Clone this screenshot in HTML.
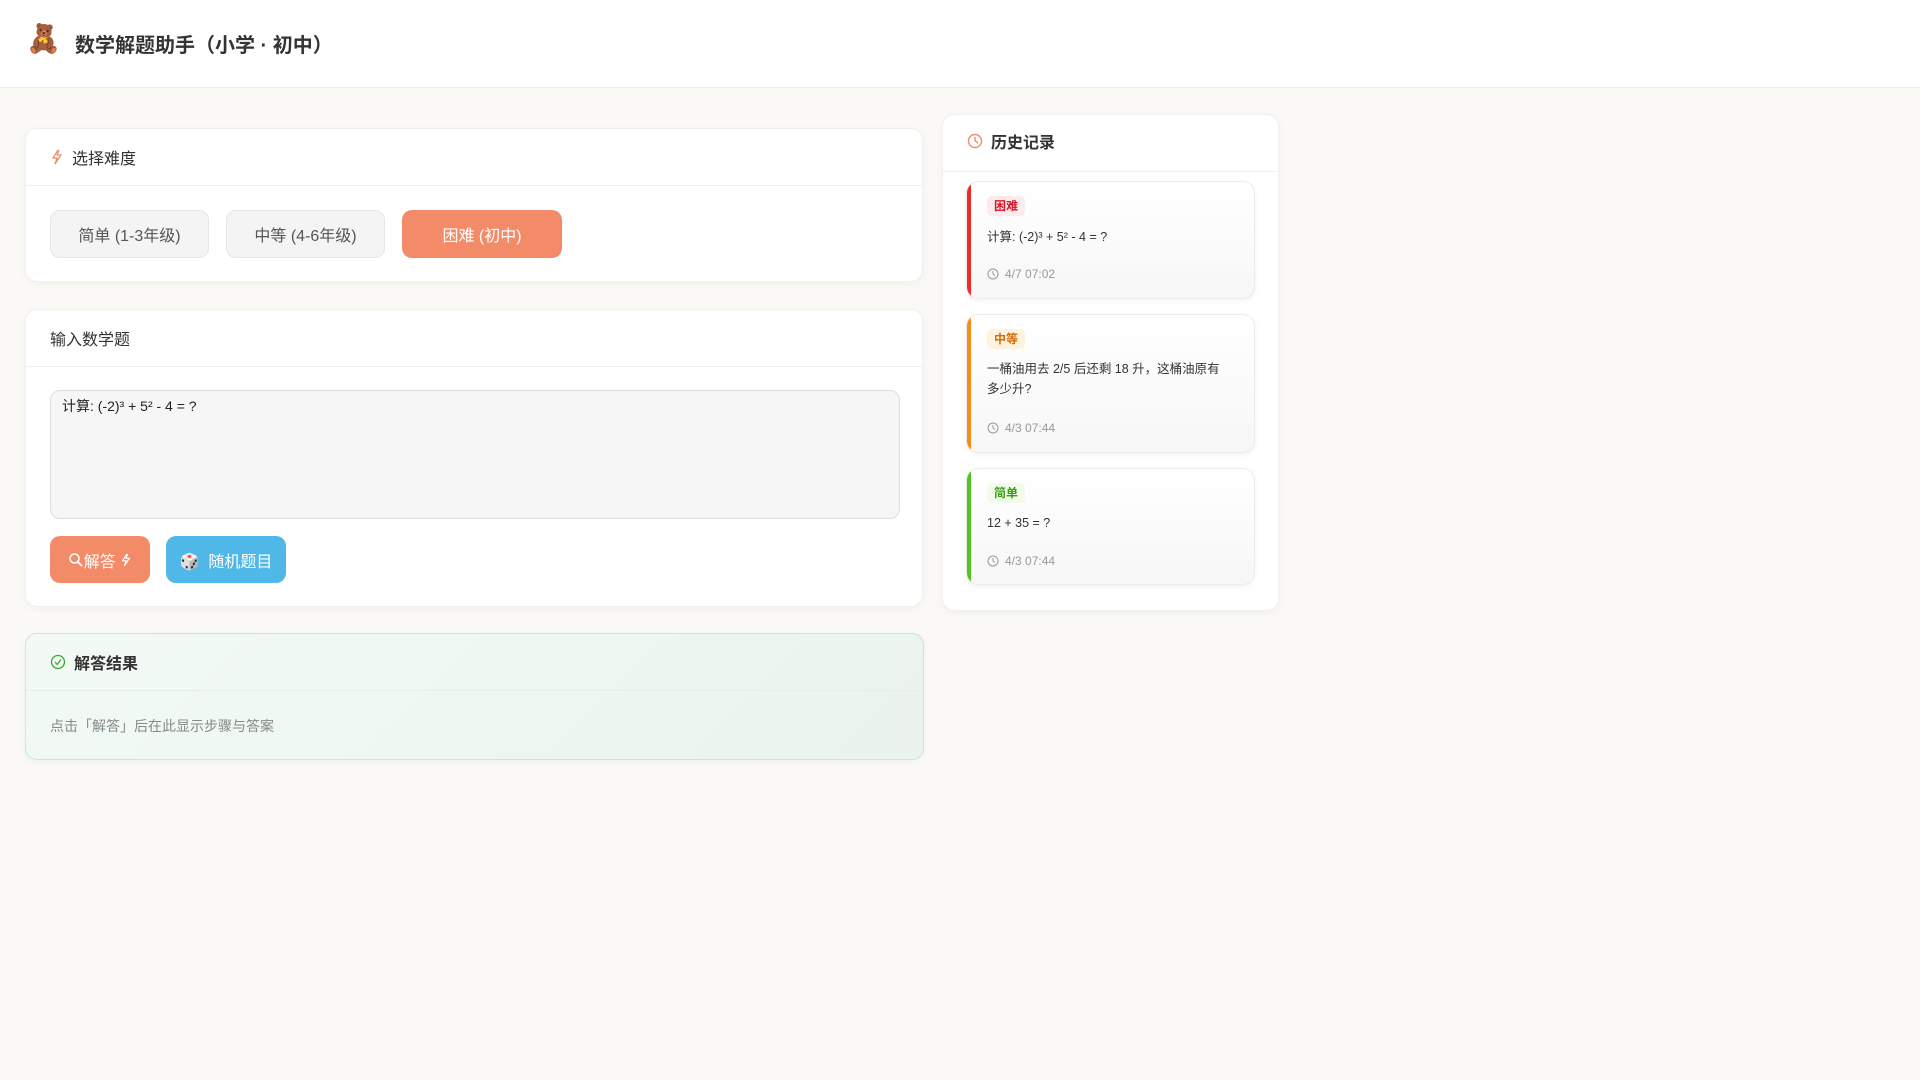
<!DOCTYPE html>
<html><head><meta charset="utf-8"><style>
*{box-sizing:border-box;margin:0;padding:0}
body{width:1920px;height:1080px;background:#faf9f6;font-family:"Liberation Sans","Noto Sans CJK SC",sans-serif;color:#333;position:relative;overflow:hidden}
.hdr{position:absolute;left:0;top:0;width:1920px;height:88px;background:#fff;border-bottom:1px solid #eee}
.hdr .logo{position:absolute;left:26px;top:22px;font-size:28px}
.hdr h1{position:absolute;left:75px;top:29px;font-size:20px;font-weight:bold;color:#333}
.card{position:absolute;background:#fff;border:1px solid #f0f0f0;border-radius:12px;box-shadow:0 2px 8px rgba(0,0,0,0.04)}
.ch{height:57px;border-bottom:1px solid #f0f0f0;display:flex;align-items:center;padding-left:24px;font-size:16px;color:#333}
.ch svg{margin-right:8px}
.btn{position:absolute;height:48px;border-radius:10px;font-size:16px;display:flex;align-items:center;justify-content:center}
.g{background:#f4f4f4;border:1px solid #e6e6e6;color:#555}
.o{background:#f38b69;color:#fff}
.item{position:absolute;left:23px;width:289px;border-radius:12px;border:1px solid #ececec;background:linear-gradient(#fff,#f7f7f7);box-shadow:0 2px 6px rgba(0,0,0,0.05);overflow:hidden}
.item .bar{position:absolute;left:0;top:0;bottom:0;width:4px}
.tag{position:absolute;left:20px;top:14px;height:20px;padding:0 7px;border-radius:5px;font-size:12px;font-weight:bold;line-height:20px}
.q{position:absolute;left:20px;font-size:12.5px;color:#333;line-height:20px;width:245px}
.t{position:absolute;left:20px;font-size:12px;color:#999;display:flex;align-items:center}
.t svg{margin-right:6px}
</style></head><body>
<div class="hdr"><div class="logo">🧸</div><h1>数学解题助手（小学 · 初中）</h1></div>

<div class="card" style="left:25px;top:128px;width:898px;height:154px">
 <div class="ch"><svg width="14" height="16" viewBox="0 0 14 16"><path d="M8 1 L3 9 H7 L5 15 L11 6 H7 L9 1" fill="none" stroke="#f38b69" stroke-width="1.2"/></svg>选择难度</div>
 <div class="btn g" style="left:24px;top:81px;width:159px">简单 (1-3年级)</div>
 <div class="btn g" style="left:200px;top:81px;width:159px">中等 (4-6年级)</div>
 <div class="btn o" style="left:376px;top:81px;width:160px">困难 (初中)</div>
</div>

<div class="card" style="left:25px;top:309px;width:898px;height:298px">
 <div class="ch">输入数学题</div>
 <div style="position:absolute;left:24px;top:80px;width:850px;height:129px;background:#f6f6f6;border:1px solid #ddd;border-radius:10px;padding:5px 11px;font-size:14px;color:#222">计算: (-2)³ + 5² - 4 = ?</div>
 <div class="btn o" style="left:24px;top:226px;width:100px;height:47px;font-size:16px">
  <svg width="16" height="16" viewBox="0 0 16 16"><circle cx="6.5" cy="6.5" r="4.5" fill="none" stroke="#fff" stroke-width="1.6"/><path d="M10 10 L14 14" stroke="#fff" stroke-width="1.8"/></svg>解答&nbsp;<svg width="12" height="16" viewBox="0 0 14 16"><path d="M8 1 L3 9 H7 L5 15 L11 6 H7 L9 1" fill="none" stroke="#fff" stroke-width="1.3"/></svg></div>
 <div class="btn" style="left:140px;top:226px;width:120px;height:47px;background:#4fb8e8;color:#fff;font-size:16px">🎲&nbsp; 随机题目</div>
</div>

<div class="card" style="left:25px;top:633px;width:899px;height:127px;background:linear-gradient(135deg,#f3faf5,#e9f4ec);border:1px solid #c9e8d2">
 <div class="ch" style="border-bottom:1px solid #e4f0e7;font-weight:bold;font-size:16px"><svg width="16" height="16" viewBox="0 0 16 16"><circle cx="8" cy="8" r="6.5" fill="none" stroke="#3aa53a" stroke-width="1.3"/><path d="M5 8 L7.2 10.5 L11 5.5" fill="none" stroke="#3aa53a" stroke-width="1.3"/></svg>解答结果</div>
 <div style="position:absolute;left:24px;top:82px;font-size:14px;color:#888">点击「解答」后在此显示步骤与答案</div>
</div>

<div class="card" style="left:942px;top:114px;width:337px;height:497px">
 <div class="ch" style="font-weight:bold;height:57px;padding-bottom:4px"><svg width="16" height="16" viewBox="0 0 16 16"><circle cx="8" cy="8" r="6.5" fill="none" stroke="#f38b69" stroke-width="1.4"/><path d="M8 4 V8 L11 10" fill="none" stroke="#f38b69" stroke-width="1.4"/></svg>历史记录</div>
 <div class="item" style="top:66px;height:118px"><div class="bar" style="background:#f02a2a"></div>
  <div class="tag" style="background:#fdeaea;color:#d8152a">困难</div>
  <div class="q" style="top:45px">计算: (-2)³ + 5² - 4 = ?</div>
  <div class="t" style="top:85px"><svg width="12" height="12" viewBox="0 0 12 12"><circle cx="6" cy="6" r="5" fill="none" stroke="#999"/><path d="M6 3 V6 L8 7.5" fill="none" stroke="#999"/></svg>4/7 07:02</div></div>
 <div class="item" style="top:199px;height:139px"><div class="bar" style="background:#fa8c16"></div>
  <div class="tag" style="background:#fff3e0;color:#d46b08">中等</div>
  <div class="q" style="top:44px">一桶油用去 2/5 后还剩 18 升，这桶油原有多少升?</div>
  <div class="t" style="top:106px"><svg width="12" height="12" viewBox="0 0 12 12"><circle cx="6" cy="6" r="5" fill="none" stroke="#999"/><path d="M6 3 V6 L8 7.5" fill="none" stroke="#999"/></svg>4/3 07:44</div></div>
 <div class="item" style="top:353px;height:117px"><div class="bar" style="background:#52c41a"></div>
  <div class="tag" style="background:#f1fbea;color:#389e0d">简单</div>
  <div class="q" style="top:44px">12 + 35 = ?</div>
  <div class="t" style="top:85px"><svg width="12" height="12" viewBox="0 0 12 12"><circle cx="6" cy="6" r="5" fill="none" stroke="#999"/><path d="M6 3 V6 L8 7.5" fill="none" stroke="#999"/></svg>4/3 07:44</div></div>
</div>
</body></html>
